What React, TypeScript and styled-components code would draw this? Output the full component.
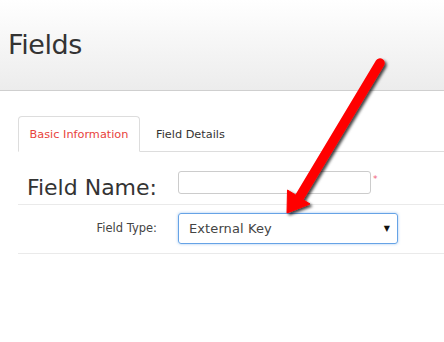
import React from "react";
import styled, { createGlobalStyle } from "styled-components";

const Global = createGlobalStyle`
  html, body { margin: 0; padding: 0; background: #fff; }
  body { font-family: "DejaVu Sans", Verdana, sans-serif; color: #333; }
`;

const Page = styled.div`
  position: relative;
  width: 444px;
  height: 342px;
  overflow: hidden;
`;

const Header = styled.header`
  height: 91px;
  box-sizing: border-box;
  padding: 29px 0 0 8px;
  background: linear-gradient(#ffffff, #ececec);
  border-bottom: 1px solid #cfcfcf;
`;

const Title = styled.h1`
  margin: 0;
  font-size: 27px;
  font-weight: normal;
  line-height: 32px;
  color: #333;
  letter-spacing: -0.4px;
`;

const Content = styled.div`
  padding: 25px 0 0 18px;
`;

const Tabs = styled.div`
  display: flex;
  border-bottom: 1px solid #ddd;
  height: 35px;
`;

const Tab = styled.div<{ $active?: boolean }>`
  box-sizing: border-box;
  height: ${(p) => (p.$active ? "36px" : "35px")};
  padding: 1px ${(p) => (p.$active ? "0" : "15px")} 0;
  width: ${(p) => (p.$active ? "122px" : "auto")};
  display: flex;
  align-items: center;
  justify-content: center;
  white-space: nowrap;
  font-size: 11.3px;
  color: ${(p) => (p.$active ? "#e8433b" : "#333")};
  background: #fff;
  border: 1px solid ${(p) => (p.$active ? "#ddd" : "transparent")};
  border-bottom-color: ${(p) => (p.$active ? "#fff" : "transparent")};
  border-radius: 4px 4px 0 0;
`;

const Row = styled.div<{ $top: number; $bottom: number }>`
  display: flex;
  align-items: flex-start;
  padding: ${(p) => p.$top}px 0 ${(p) => p.$bottom}px 0;
  border-bottom: 1px solid #eaeaea;
`;

const Label = styled.label<{ $big?: boolean }>`
  width: 160px;
  box-sizing: border-box;
  padding-right: 21px;
  text-align: right;
  white-space: nowrap;
  font-size: ${(p) => (p.$big ? "22px" : "11.5px")};
  line-height: ${(p) => (p.$big ? "24px" : "31px")};
  margin: ${(p) => (p.$big ? "5px 0 -6px 0" : "0")};
  color: ${(p) => (p.$big ? "#333" : "#444")};
`;

const FieldWrap = styled.div`
  display: flex;
  align-items: flex-start;
`;

const TextInput = styled.input`
  box-sizing: border-box;
  width: 193px;
  height: 23px;
  border: 1px solid #ccc;
  border-radius: 3px;
  padding: 0 6px;
  margin: 0;
  outline: none;
  background: #fff;
`;

const Required = styled.span`
  color: #f0607a;
  font-size: 9px;
  margin: 3px 0 0 2px;
`;

const Select = styled.div`
  box-sizing: border-box;
  width: 220px;
  height: 31px;
  border: 1px solid #66a3e6;
  border-radius: 3px;
  box-shadow: 0 0 3px rgba(102, 163, 230, 0.6);
  display: flex;
  align-items: center;
  justify-content: space-between;
  padding: 0 7px 0 10px;
  font-size: 13px;
  color: #444;
  letter-spacing: 0.1px;
`;

const Caret = styled.span`
  font-size: 8px;
  color: #111;
`;

const Overlay = styled.svg`
  position: absolute;
  left: 0;
  top: 0;
  pointer-events: none;
`;

export default function App() {
  return (
    <Page>
      <Global />
      <Header>
        <Title>Fields</Title>
      </Header>
      <Content>
        <Tabs>
          <Tab $active>Basic Information</Tab>
          <Tab>Field Details</Tab>
        </Tabs>
        <Row $top={19} $bottom={10}>
          <Label $big>Field Name:</Label>
          <FieldWrap>
            <TextInput />
            <Required>*</Required>
          </FieldWrap>
        </Row>
        <Row $top={8} $bottom={9}>
          <Label>Field Type:</Label>
          <Select>
            <span>External Key</span>
            <Caret>▼</Caret>
          </Select>
        </Row>
      </Content>
      <Overlay width="444" height="342" viewBox="0 0 444 342">
        <defs>
          <filter id="sh" x="-20%" y="-20%" width="140%" height="140%">
            <feDropShadow dx="2" dy="2" stdDeviation="1.5" floodColor="#000" floodOpacity="0.75" />
          </filter>
        </defs>
        <g filter="url(#sh)" fill="#ff0000" stroke="#ff0000">
          <line x1="380" y1="63" x2="299" y2="198" strokeWidth="9.5" strokeLinecap="round" />
          <polygon points="287,213 287.5,190 310,204" strokeWidth="1" strokeLinejoin="round" />
        </g>
      </Overlay>
    </Page>
  );
}
